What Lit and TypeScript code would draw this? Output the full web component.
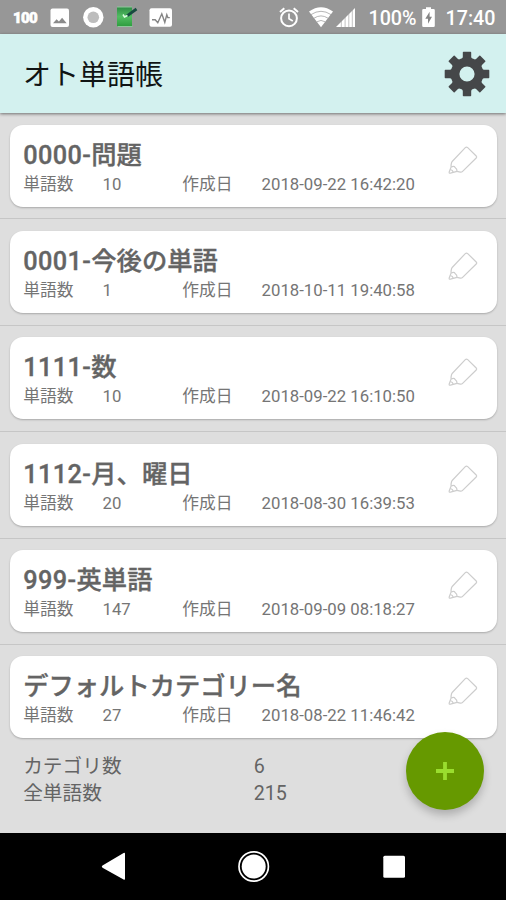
import { LitElement, html, css, svg } from "lit";
import { customElement, property } from "lit/decorators.js";

interface Category {
  code: string;
  name: string;
  words: number;
  created: string;
}

const CATEGORIES: Category[] = [
  { code: "0000-", name: "問題", words: 10, created: "2018-09-22 16:42:20" },
  { code: "0001-", name: "今後の単語", words: 1, created: "2018-10-11 19:40:58" },
  { code: "1111-", name: "数", words: 10, created: "2018-09-22 16:10:50" },
  { code: "1112-", name: "月、曜日", words: 20, created: "2018-08-30 16:39:53" },
  { code: "999-", name: "英単語", words: 147, created: "2018-09-09 08:18:27" },
  { code: "", name: "デフォルトカテゴリー名", words: 27, created: "2018-08-22 11:46:42" },
];

@customElement("status-bar")
class StatusBar extends LitElement {
  static styles = css`
    :host {
      display: flex;
      justify-content: space-between;
      align-items: center;
      height: 34px;
      background: #979797;
      color: #fff;
    }
    svg {
      display: block;
    }
    .notes,
    .system {
      display: flex;
      align-items: center;
      height: 34px;
    }
    .notes {
      padding-left: 13px;
    }
    .hundred {
      font: 900 15px/34px Roboto, sans-serif;
      letter-spacing: -0.7px;
      width: 37px;
      padding-top: 1px;
      -webkit-text-stroke: 0.6px #fff;
    }
    .system {
      padding-right: 10.5px;
    }
    .percent,
    .time {
      font: 500 19.7px/34px Roboto, sans-serif;
      padding-top: 3px;
    }
    .percent {
      margin: 0 5px 0 12px;
    }
    .time {
      margin-left: 11px;
    }
  `;
  render() {
    return html`
      <div class="notes">
        <span class="hundred">100</span>
        <svg width="124" height="34" viewBox="50 0 124 34">
          <rect x="50.5" y="8.5" width="18.5" height="18.5" rx="2" fill="#fff" />
          <path d="M53 23.200l3.600-4 2.300 2.300 3.200-3.700 4.600 5.400z" fill="#8b8b8b" />
          <circle cx="93.3" cy="17.3" r="10.2" fill="#fff" />
          <circle cx="93.3" cy="17.3" r="5.8" fill="#bdbdbd" />
          <defs>
            <linearGradient id="pad" x1="0" y1="0" x2="0" y2="1">
              <stop offset="0" stop-color="#2e8b45" />
              <stop offset="0.5" stop-color="#52be62" />
              <stop offset="1" stop-color="#2d9c3e" />
            </linearGradient>
          </defs>
          <path d="M117 7h15v19.500h-15z" fill="url(#pad)" />
          <path d="M117 7h15M117.500 26.500h15" stroke="#8fc79b" stroke-width="1" />
          <path d="M127 15.800L136.500 9" stroke="#174b40" stroke-width="2.800" />
          <path d="M123 14.500l1.500 2.500 3-1.500" fill="none" stroke="#d9ffe0" stroke-width="1.500" />
          <rect x="149.500" y="8.300" width="22.500" height="18.500" rx="2" fill="#fff" />
          <path d="M152 19.800h3.200l2.600 3 4-9 3 8.500 2-7.500 1 2.800h2" fill="none" stroke="#858585" stroke-width="1.400" />
        </svg>
      </div>
      <div class="system">
        <svg width="78" height="34" viewBox="278.500 0 78 34">
          <g fill="none" stroke="#fff">
            <circle cx="289.500" cy="18.300" r="7.900" stroke-width="2" />
            <path d="M289.500 13.500v5.200l3.800 2.300" stroke-width="1.700" />
            <path d="M280.500 12l4.300-3.800M298.500 12l-4.300-3.800" stroke-width="2" />
          </g>
          <path d="M309.500 11.500q12-8.500 24 0L321.500 27.200z" fill="#fff" />
          <path d="M311.500 14.600q10-6.600 20 0M314.500 18.200q7-4.600 14 0M317.300 21.800q4.200-2.700 8.400 0" fill="none" stroke="#979797" stroke-width="0.700" />
          <path d="M336.500 27L355.500 8v19z" fill="#fff" />
          <path d="M341.800 20v8M345.600 16v12M349.300 12v16M352.800 9v19" stroke="#979797" stroke-width="0.600" />
        </svg>
        <span class="percent">100%</span>
        <svg width="13" height="34" viewBox="0 0 13 34">
          <path d="M1.500 9H4V7.200h5V9h2.500q1.300 0 1.300 1.300v15.400q0 1.300-1.300 1.300h-10q-1.300 0-1.300-1.300V10.300Q.2 9 1.500 9z" fill="#fff" />
          <path d="M7.600 11.800L3.300 18.700h2.700v5L10 16.800H7.600z" fill="#858585" />
        </svg>
        <span class="time">17:40</span>
      </div>
    `;
  }
}

@customElement("app-header")
class AppHeader extends LitElement {
  static styles = css`
    :host {
      display: flex;
      align-items: center;
      justify-content: space-between;
      height: 79px;
      box-sizing: border-box;
      padding: 0 16px 0 23px;
      background: #d3f1ef;
      box-shadow: 0 1px 3px rgba(0, 0, 0, 0.5);
      position: relative;
    }
    .title {
      font: 400 28px/40px Roboto, "Noto Sans CJK JP", sans-serif;
      color: #101414;
      padding-top: 4px;
    }
    svg {
      display: block;
    }
  `;
  render() {
    return html`
      <span class="title">オト単語帳</span>
      <svg width="46" height="46" viewBox="-23 -23 46 46">
        <g fill="#454749">
          ${[0, 45, 90, 135, 180, 225, 270, 315].map(
            (a) => svg`<path d="M-6 -12L-4.200 -17V-21.600Q-4.200 -22.300 -3.500 -22.300H3.500Q4.200 -22.300 4.200 -21.600V-17L6 -12z" transform="rotate(${a})" />`
          )}
        </g>
        <circle r="12" fill="none" stroke="#454749" stroke-width="8.800" />
      </svg>
    `;
  }
}

@customElement("category-card")
class CategoryCard extends LitElement {
  @property({ attribute: false }) item!: Category;
  static styles = css`
    :host {
      display: flex;
      justify-content: space-between;
      box-sizing: border-box;
      height: 82px;
      margin: 0 9.500px 0 10.400px;
      padding: 15px 18px 0 12.800px;
      border-radius: 13px;
      background: #fff;
      box-shadow: 0 1px 2px rgba(0, 0, 0, 0.24);
      color: #646464;
    }
    .name {
      font: 500 25.300px/32px Roboto, "Noto Sans CJK JP", sans-serif;
      -webkit-text-stroke: 0.350px #646464;
      white-space: nowrap;
    }
    .code {
      letter-spacing: 0.400px;
    }
    .meta {
      display: grid;
      grid-template-columns: 79.300px 79.800px 79.300px 160px;
      font: 400 16.750px/25px Roboto, "Noto Sans CJK JP", sans-serif;
      color: #757575;
    }
    svg {
      display: block;
      margin-top: 5px;
      flex: none;
    }
  `;
  render() {
    return html`
      <div>
        <div class="name"><span class="code">${this.item.code}</span>${this.item.name}</div>
        <div class="meta">
          <span>単語数</span><span>${this.item.words}</span>
          <span>作成日</span><span>${this.item.created}</span>
        </div>
      </div>
      <svg width="32" height="32" viewBox="0 0 32 32" fill="none" stroke="#cdcdcd" stroke-width="1.200" stroke-linejoin="round">
        <path d="M4.700 17L18.300 2.600q1.200-1.100 2.400 0l8.500 8.400q1 1 0 2L15.600 26.400q-.8.900-2.300.8l-3.300-.8" />
        <path d="M4.700 17q-.8 2.800-.6 5L2.200 27q-.3 1.500 1.200 1.200l6.600-1.800" />
        <path d="M4.100 22q3-1.500 4 .5 2.200 1.500 1.900 3.900M3.200 24.500q2.500.5 3 2.500" />
      </svg>
    `;
  }
}

@customElement("app-root")
class AppRoot extends LitElement {
  static styles = css`
    :host {
      display: flex;
      flex-direction: column;
      width: 506px;
      height: 900px;
      overflow: hidden;
      background: #dedede;
      position: relative;
    }
    .list {
      flex: none;
    }
    .row {
      box-sizing: border-box;
      height: 106.400px;
      padding-top: 11.500px;
      border-bottom: 1px solid #c6c6c6;
    }
    .row:last-child {
      border-bottom: none;
      height: 94px;
    }
    .totals {
      flex: 1;
      display: grid;
      grid-template-columns: 230.500px auto;
      grid-auto-rows: 26.500px;
      align-content: start;
      padding: 15.300px 0 0 23.200px;
      font: 400 19.680px/26.500px Roboto, "Noto Sans CJK JP", sans-serif;
      color: #646464;
    }
    .fab {
      position: absolute;
      left: 405.500px;
      top: 731.500px;
      width: 78.500px;
      height: 78.500px;
      border-radius: 50%;
      background: #669900;
      box-shadow: 0 5px 9px rgba(0, 0, 0, 0.22);
      display: flex;
      align-items: center;
      justify-content: center;
    }
    .nav {
      flex: none;
      height: 67px;
      background: #000;
    }
    svg {
      display: block;
    }
  `;
  render() {
    const total = CATEGORIES.reduce((n, c) => n + c.words, 0);
    return html`
      <status-bar></status-bar>
      <app-header></app-header>
      <div class="list">
        ${CATEGORIES.map((c) => html`<div class="row"><category-card .item=${c}></category-card></div>`)}
      </div>
      <div class="totals">
        <span>カテゴリ数</span><span>${CATEGORIES.length}</span>
        <span>全単語数</span><span>${total}</span>
      </div>
      <div class="nav">
        <svg width="506" height="67" viewBox="0 833 506 67">
          <path d="M102.500 865.600L123.600 853q1.400-.7 1.400.8v25q0 1.500-1.400.8L102.500 867.700q-1.500-1 0-2.100z" fill="#fff" />
          <circle cx="253.700" cy="866.500" r="14.700" fill="none" stroke="#fff" stroke-width="1.700" />
          <circle cx="253.700" cy="866.500" r="12" fill="#fff" />
          <rect x="383.300" y="855.700" width="21.700" height="22" rx="1.500" fill="#fff" />
        </svg>
      </div>
      <div class="fab">
        <svg width="18" height="18" viewBox="0 0 18 18">
          <path d="M9 0v18M0 9h18" stroke="#9add2e" stroke-width="3.800" />
        </svg>
      </div>
    `;
  }
}
